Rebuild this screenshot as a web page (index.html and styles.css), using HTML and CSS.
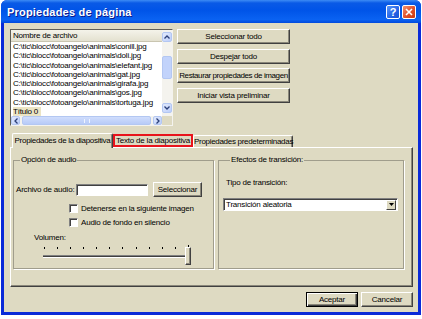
FILE: index.html
```html
<!DOCTYPE html>
<html lang="es">
<head>
    <meta charset="UTF-8">
    <title>Propiedades de página</title>
    <link rel="stylesheet" href="styles.css">
</head>
<body>
    <div class="window">
        <div class="titlebar">
            <span class="title">Propiedades de página</span>
            <div class="caption-buttons">
                <span class="cap-btn help">?</span>
                <span class="cap-btn close">
                    <svg width="8" height="8" viewBox="0 0 8 8"><path d="M1 1L7 7M7 1L1 7" stroke="#fff" stroke-width="1.6"/></svg>
                </span>
            </div>
        </div>

        <div class="client">
            <div class="top">
                <div class="listbox">
                    <div class="list-main">
                        <div class="list-header">Nombre de archivo</div>
                        <div class="list-row">C:\tic\blocc\fotoangelo\animals\conill.jpg</div>
                        <div class="list-row">C:\tic\blocc\fotoangelo\animals\doli.jpg</div>
                        <div class="list-row">C:\tic\blocc\fotoangelo\animals\elefant.jpg</div>
                        <div class="list-row">C:\tic\blocc\fotoangelo\animals\gat.jpg</div>
                        <div class="list-row">C:\tic\blocc\fotoangelo\animals\girafa.jpg</div>
                        <div class="list-row">C:\tic\blocc\fotoangelo\animals\gos.jpg</div>
                        <div class="list-row">C:\tic\blocc\fotoangelo\animals\tortuga.jpg</div>
                        <div class="list-row group-row"><span>Título 0</span></div>
                    </div>
                    <div class="vscroll">
                        <span class="sb-btn">
                            <svg width="6" height="4" viewBox="0 0 6 4"><path d="M0.5 3.5L3 1L5.5 3.5" fill="none" stroke="#2b3f78" stroke-width="1.3"/></svg>
                        </span>
                        <span class="vthumb"></span>
                        <span class="sb-btn">
                            <svg width="6" height="4" viewBox="0 0 6 4"><path d="M0.5 0.5L3 3L5.5 0.5" fill="none" stroke="#2b3f78" stroke-width="1.3"/></svg>
                        </span>
                    </div>
                    <div class="hscroll">
                        <span class="sb-btn">
                            <svg width="4" height="6" viewBox="0 0 4 6"><path d="M3.5 0.5L1 3L3.5 5.5" fill="none" stroke="#2b3f78" stroke-width="1.3"/></svg>
                        </span>
                        <span class="hthumb"><i></i></span>
                        <span class="sb-btn">
                            <svg width="4" height="6" viewBox="0 0 4 6"><path d="M0.5 0.5L3 3L0.5 5.5" fill="none" stroke="#2b3f78" stroke-width="1.3"/></svg>
                        </span>
                    </div>
                    <div class="corner"></div>
                </div>

                <div class="side-buttons">
                    <button class="btn">Seleccionar todo</button>
                    <button class="btn">Despejar todo</button>
                    <button class="btn btn-tight">Restaurar propiedades de imagen</button>
                    <button class="btn">Iniciar vista preliminar</button>
                </div>
            </div>

            <div class="tabs">
                <span class="tab active tab-slide">Propiedades de la diapositiva</span>
                <span class="tab marked tab-text">Texto de la diapositiva</span>
                <span class="tab tab-default">Propiedades predeterminadas</span>
            </div>

            <div class="panel">
                <fieldset class="group group-audio">
                    <legend>Opción de audio</legend>
                    <div class="audio-row">
                        <label class="audio-label" for="audio">Archivo de audio:</label>
                        <input class="text-input" id="audio" type="text">
                        <button class="btn btn-small">Seleccionar</button>
                    </div>
                    <div class="check-row first">
                        <span class="checkbox"></span>
                        <span>Detenerse en la siguiente imagen</span>
                    </div>
                    <div class="check-row">
                        <span class="checkbox"></span>
                        <span>Audio de fondo en silencio</span>
                    </div>
                    <div class="volume-label">Volumen:</div>
                    <div class="slider">
                        <div class="ticks">
                            <i></i><i></i><i></i><i></i><i></i><i></i>
                            <i></i><i></i><i></i><i></i><i></i><i class="big"></i>
                        </div>
                        <div class="track"></div>
                        <span class="thumb"></span>
                    </div>
                </fieldset>

                <fieldset class="group group-effects">
                    <legend>Efectos de transición:</legend>
                    <div class="type-label">Tipo de transición:</div>
                    <div class="select">
                        <span>Transición aleatoria</span>
                        <span class="select-arrow">
                            <svg width="5" height="3" viewBox="0 0 5 3"><path d="M0 0H5L2.5 3Z" fill="#000"/></svg>
                        </span>
                    </div>
                </fieldset>
            </div>

            <div class="footer">
                <button class="btn btn-default">Aceptar</button>
                <button class="btn">Cancelar</button>
            </div>
        </div>
    </div>
</body>
</html>
```

FILE: styles.css
```css
* {
    box-sizing: border-box;
}

body {
    margin: 0;
    background: #fff;
    font-family: "Liberation Sans", Arial, sans-serif;
    font-size: 8px;
    letter-spacing: -0.2px;
    color: #000;
}

.window {
    width: 420px;
    height: 315px;
    margin-left: 1px;
    background: #0a2ad8;
    border-radius: 6px 6px 0 0;
    display: flex;
    flex-direction: column;
}

.titlebar {
    height: 23px;
    flex: none;
    display: flex;
    align-items: center;
    justify-content: space-between;
    padding: 0 5px 0 6px;
    border-radius: 6px 6px 0 0;
    background: linear-gradient(to bottom, #3d8cf5 0, #0a5ae6 3px, #0054e8 45%, #0a62f2 85%, #0049dc 100%);
}

.title {
    color: #fff;
    font-weight: bold;
    font-size: 11px;
    letter-spacing: 0.2px;
    text-shadow: 1px 1px #0c1a8a;
}

.caption-buttons {
    display: flex;
    gap: 2px;
}

.cap-btn {
    width: 14px;
    height: 14px;
    border: 1px solid #fff;
    border-radius: 2px;
    display: flex;
    align-items: center;
    justify-content: center;
    color: #fff;
    font-weight: bold;
    font-size: 11px;
    letter-spacing: 0;
}

.help {
    background: linear-gradient(135deg, #5a96f8, #2463e6 60%, #1c52d2);
}

.close {
    background: linear-gradient(135deg, #f09070, #e0502a 55%, #c73a12);
}

.client {
    flex: 1;
    margin: 0 3px 3px;
    background: #dedac2;
    padding: 6px 5px 5px 6px;
    display: flex;
    flex-direction: column;
}

.top {
    display: flex;
    gap: 4px;
    height: 97px;
}

/* list view */
.listbox {
    width: 163px;
    height: 97px;
    background: #fff;
    border: 1px solid;
    border-color: #5f5e57 #f4f3ee #f4f3ee #5f5e57;
    display: grid;
    grid-template-columns: 1fr 10px;
    grid-template-rows: 1fr 9px;
}

.list-main {
    overflow: hidden;
    white-space: nowrap;
}

.list-header {
    height: 12px;
    line-height: 11px;
    padding-left: 2px;
    background: linear-gradient(#f4f3ea, #e4e1d0);
    border-bottom: 1px solid #c9c5b0;
}

.list-row {
    height: 9.3px;
    line-height: 9.3px;
    padding-left: 2px;
}

.group-row span {
    background: #ebe4c4;
    padding-right: 3px;
}

.vscroll,
.hscroll {
    background: #f4f3ee;
    display: flex;
    justify-content: space-between;
}

.vscroll {
    flex-direction: column;
    padding: 2px 0 3px;
}

.sb-btn {
    width: 9px;
    height: 9px;
    border: 1px solid #b3c7f2;
    border-radius: 2px;
    background: linear-gradient(135deg, #e2eafd, #bccefa);
    display: flex;
    align-items: center;
    justify-content: center;
}

.vscroll .sb-btn {
    width: 10px;
    height: 10px;
}

.vthumb {
    height: 23px;
    margin-bottom: 10px;
    border: 1px solid #b3c7f2;
    border-radius: 2px;
    background: #c2d3fb;
}

.hscroll {
    align-items: center;
}

.hthumb {
    flex: 1;
    height: 9px;
    margin: 0 2px;
    border: 1px solid #b3c7f2;
    border-radius: 2px;
    background: linear-gradient(#d0ddfc, #b7cbf8);
    display: flex;
    align-items: center;
    justify-content: center;
}

.hthumb i {
    width: 6px;
    height: 4px;
    border-left: 1px solid #eef3ff;
    border-right: 1px solid #eef3ff;
}

.corner {
    background: #dedac2;
}

/* buttons */
.side-buttons {
    width: 113px;
    display: flex;
    flex-direction: column;
    gap: 4.6px;
}

.btn {
    height: 15px;
    padding: 0;
    font: inherit;
    letter-spacing: inherit;
    color: #000;
    background: #dedac2;
    border: 1px solid;
    border-color: #fff #404040 #404040 #fff;
    box-shadow: inset -1px -1px #8a877a;
    white-space: nowrap;
}

.btn-tight {
    letter-spacing: -0.4px;
}

/* tabs */
.tabs {
    display: flex;
    align-items: flex-end;
    height: 14px;
    margin-top: 7px;
    padding-left: 2px;
    position: relative;
    z-index: 1;
}

.tab {
    height: 12px;
    line-height: 11px;
    text-align: center;
    white-space: nowrap;
    background: #dedac2;
    border: 1px solid;
    border-color: #fff #404040 transparent #fff;
    border-bottom: none;
    border-radius: 2px 2px 0 0;
    box-shadow: inset -1px 0 #8a877a;
}

.tab.active {
    height: 15px;
    margin-bottom: -1px;
    line-height: 13px;
    letter-spacing: -0.3px;
}

.tab.marked {
    height: 13px;
    line-height: 9px;
    border: 2px solid #e8141c;
    border-radius: 0;
    box-shadow: none;
}

.tab-slide {
    width: 101px;
}

.tab-text {
    width: 80px;
}

.tab-default {
    width: 100px;
    letter-spacing: -0.3px;
}

/* tab panel */
.panel {
    height: 140px;
    border: 1px solid;
    border-color: #fff #404040 #404040 #fff;
    box-shadow: inset -1px -1px #8a877a;
    padding: 7px 8px 0 2px;
    display: flex;
    gap: 4px;
}

.group {
    margin: 0;
    padding: 0;
    height: 114px;
    border: 1px solid #a09d8c;
    box-shadow: 1px 1px #fff;
}

.group legend {
    margin-left: 4px;
    padding: 0 1px;
    line-height: 10px;
    height: 10px;
}

.group-audio {
    width: 201px;
    padding: 17px 0 0 2px;
}

.group-effects {
    width: 186px;
    padding: 13px 0 0 7px;
}

.audio-row {
    display: flex;
    align-items: center;
    height: 15px;
}

.audio-label {
    width: 60px;
    white-space: nowrap;
}

.text-input {
    width: 72px;
    height: 12px;
    padding: 0;
    background: #fff;
    border: 1px solid;
    border-color: #808080 #fff #fff #808080;
    box-shadow: inset 1px 1px #404040;
    outline: none;
}

.btn-small {
    width: 49px;
    margin-left: 5px;
}

.check-row {
    display: flex;
    align-items: center;
    gap: 3px;
    height: 10px;
    margin-top: 4px;
    padding-left: 53px;
    white-space: nowrap;
}

.check-row.first {
    margin-top: 6px;
}

.checkbox {
    width: 9px;
    height: 9px;
    background: #fff;
    border: 1px solid;
    border-color: #808080 #fff #fff #808080;
    box-shadow: inset 1px 1px #404040;
}

.volume-label {
    height: 10px;
    line-height: 10px;
    margin: 6px 0 0 18px;
}

.slider {
    position: relative;
    width: 152px;
    height: 21px;
    margin: 2px 0 0 25px;
}

.ticks {
    display: flex;
    justify-content: space-between;
    align-items: center;
    height: 5px;
    padding: 0 4px 0 3px;
}

.ticks i {
    width: 1px;
    height: 2px;
    background: #000;
}

.ticks i.big {
    height: 5px;
}

.track {
    width: 147px;
    height: 3px;
    margin: 5px 0 0 2px;
    border-top: 1px solid #808080;
    border-bottom: 1px solid #fff;
    background: #404040;
}

.thumb {
    position: absolute;
    right: 2px;
    top: 2px;
    width: 6px;
    height: 18px;
    background: #dedac2;
    border: 1px solid;
    border-color: #fff #404040 #404040 #fff;
    box-shadow: inset -1px -1px #8a877a;
}

.type-label {
    height: 10px;
    line-height: 10px;
}

.select {
    width: 175px;
    height: 13px;
    margin: 10px 0 0 -3px;
    padding-left: 2px;
    background: #fff;
    border: 1px solid;
    border-color: #808080 #fff #fff #808080;
    box-shadow: inset 1px 1px #404040;
    display: flex;
    align-items: center;
    justify-content: space-between;
}

.select-arrow {
    width: 10px;
    height: 10px;
    margin-right: 1px;
    background: #dedac2;
    border: 1px solid;
    border-color: #fff #404040 #404040 #fff;
    display: flex;
    align-items: center;
    justify-content: center;
}

/* dialog buttons */
.footer {
    display: flex;
    justify-content: flex-end;
    gap: 3px;
    margin-top: 5px;
}

.footer .btn {
    width: 52px;
}

.btn-default {
    border-color: #000;
    box-shadow: inset 1px 1px #fff, inset -1px -1px #404040, inset -2px -2px #8a877a;
}
```
